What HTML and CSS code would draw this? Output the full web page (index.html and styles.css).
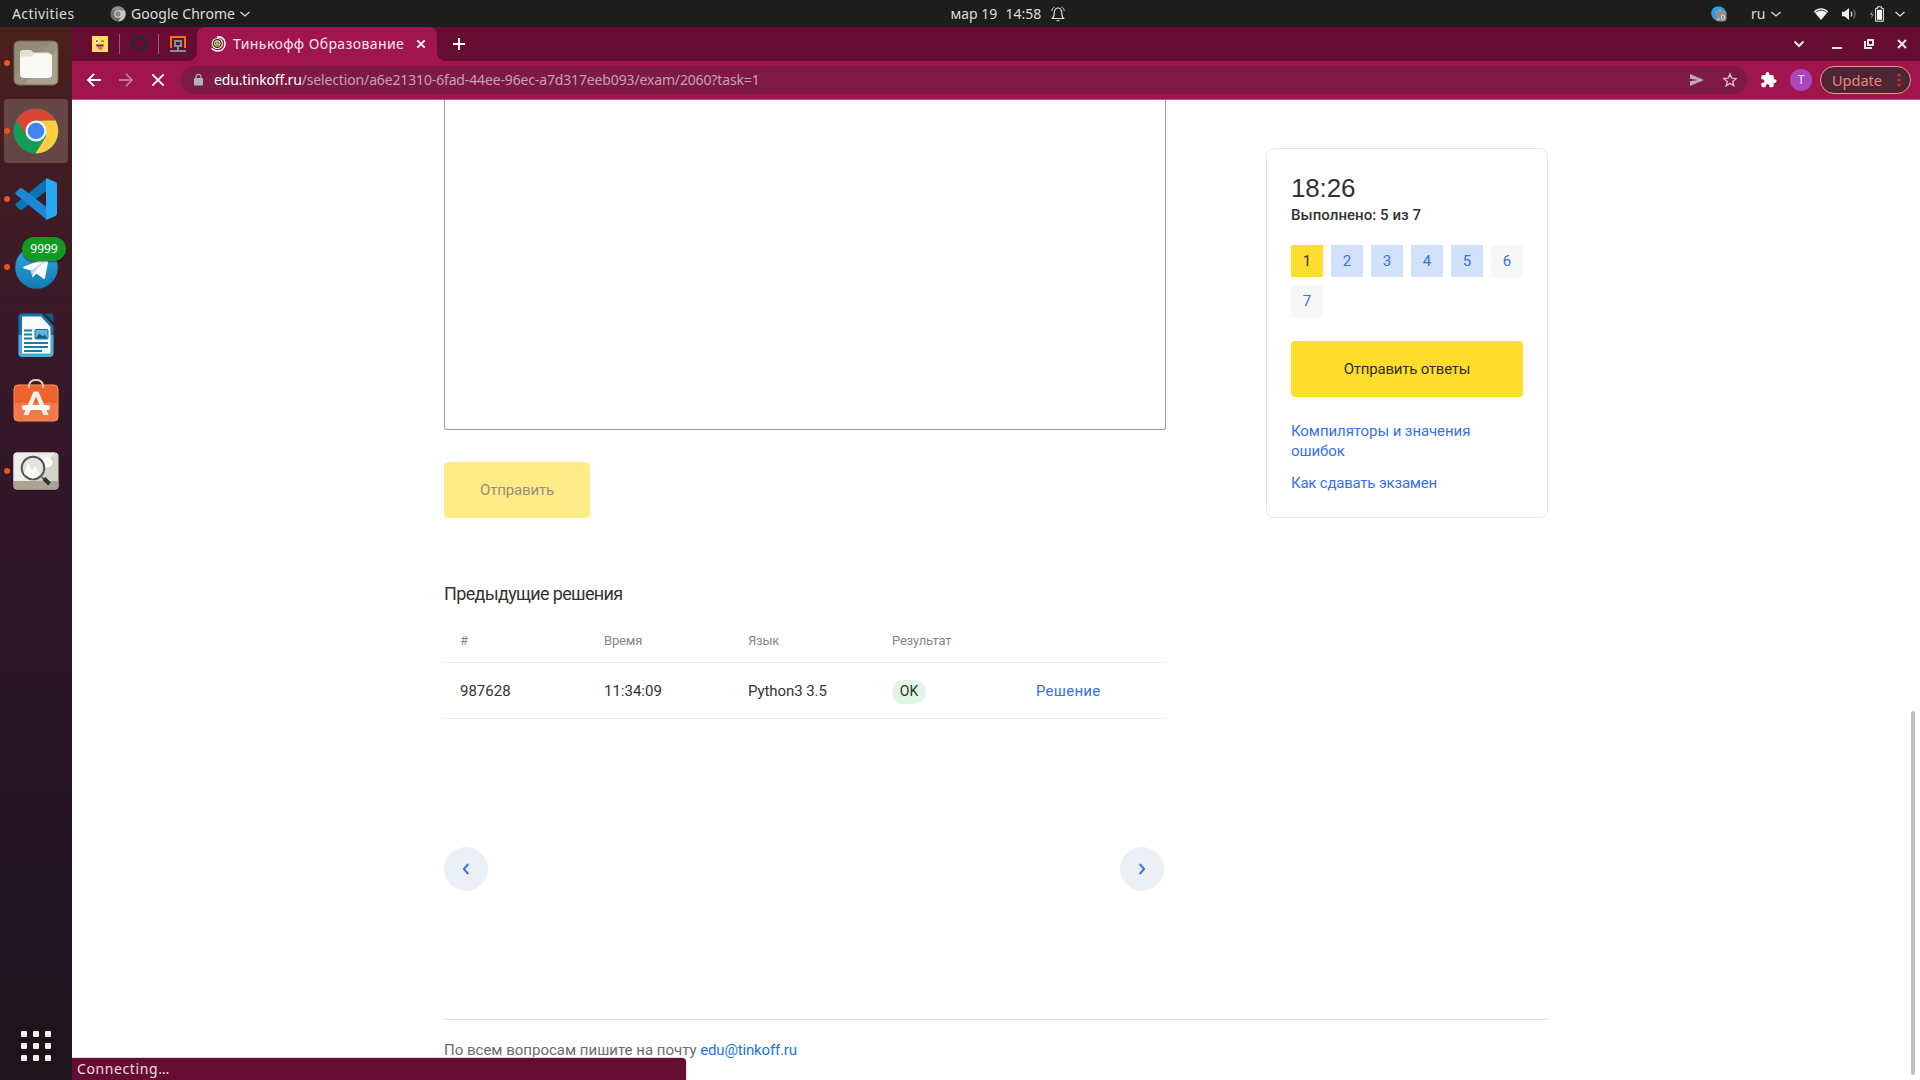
FILE: index.html
```html
<!DOCTYPE html>
<html lang="ru">
<head>
<meta charset="utf-8">
<title>Тинькофф Образование</title>
<link rel="stylesheet" href="styles.css">
</head>
<body>
<header class="topbar">
  <div class="topbar-left">
    <span class="activities">Activities</span>
    <svg class="app-icon" width="16" height="16" viewBox="0 0 16 16"><circle cx="8" cy="8" r="7.6" fill="#6f6f6f"/><path d="M8 4.2h6.7A7.6 7.6 0 0 1 8.3 15.600L11.300 10z" fill="#c4c4c4"/><path d="M1.400 4.200A7.600 7.600 0 0 1 14.700 4.200H8z" fill="#8c8c8c"/><circle cx="8" cy="8" r="3.700" fill="#ddd"/><circle cx="8" cy="8" r="2.700" fill="#858585"/></svg>
    <span class="app-name">Google Chrome</span>
    <svg width="12" height="8" viewBox="0 0 12 8"><path d="M1.500 2l4.500 4 4.500-4" fill="none" stroke="#ddd" stroke-width="1.300"/></svg>
  </div>
  <div class="clock">
    <span class="date">мар 19</span><span class="time">14:58</span>
    <svg width="14" height="16" viewBox="0 0 14 16" fill="none" stroke="#ddd" stroke-width="1.200"><path d="M1.500 12.500c2-2 1.500-4 1.800-6.200C3.600 3.500 5 2 7 2s3.400 1.500 3.700 4.300c.3 2.200-.2 4.200 1.800 6.200z"/><path d="M5.500 14.700h3M.8 5C1 3 2 1.600 3.500 1M13.200 5C13 3 12 1.600 10.500 1" stroke-width="1"/></svg>
  </div>
  <div class="tray">
    <svg class="tray-tg" width="16" height="16" viewBox="0 0 16 16"><circle cx="7.500" cy="7.500" r="7.300" fill="#2a9fdb"/><path d="M4 6l6-2.500-1 4" fill="#e8f4fb"/><rect x="4.500" y="4.500" width="11" height="11" rx="3" fill="#8f8f8f"/><path d="M6 13h3" stroke="#ddd"/><rect x="10.500" y="9" width="3" height="4.500" rx="1" fill="none" stroke="#ddd"/></svg>
    <span class="lang">ru</span>
    <svg class="tray-chev1" width="12" height="8" viewBox="0 0 12 8"><path d="M1.500 2l4.500 4 4.500-4" fill="none" stroke="#ddd" stroke-width="1.300"/></svg>
    <svg class="tray-wifi" width="16" height="14" viewBox="0 0 16 14"><path d="M.8 4.500C5 .3 11 .3 15.200 4.500L8 13z" fill="#f2f2f2"/><path d="M2.300 5.400c3.500-2.900 7.900-2.900 11.400 0" fill="none" stroke="#1d1d1d" stroke-width=".9"/></svg>
    <svg class="tray-sound" width="16" height="14" viewBox="0 0 16 14"><path d="M1 4.800h2.500L8 1v12L3.500 9.200H1z" fill="#f2f2f2"/><path d="M10 4.500c1 1.500 1 3.500 0 5" fill="none" stroke="#ddd" stroke-width="1.200"/><path d="M12.500 2.700c2 2.700 2 5.900 0 8.600" fill="none" stroke="#777" stroke-width="1.200"/></svg>
    <svg class="tray-batt" width="16" height="16" viewBox="0 0 16 16"><path d="M3.600 4L.8 9h2l-.6 4 2.600-5H3z" fill="#888"/><path d="M6.600 2.300h2V.8h3.800v1.500h2v12.900H6.600z" fill="none" stroke="#f2f2f2" stroke-width="1"/><rect x="8" y="3.800" width="5" height="10" fill="#f2f2f2"/></svg>
    <svg width="12" height="8" viewBox="0 0 12 8"><path d="M1.500 2l4.500 4 4.500-4" fill="none" stroke="#ddd" stroke-width="1.300"/></svg>
  </div>
</header>

<div class="desktop">
<nav class="dock">
  <div class="dock-item running">
    <svg width="46" height="46" viewBox="0 0 46 46"><rect x="1" y="1" width="44" height="44" rx="5" fill="#9b927d"/><path d="M6 1h34L1 36V6a5 5 0 0 1 5-5z" fill="#948b77"/><path d="M45 8v32a5 5 0 0 1-5 5H10z" fill="#aaa28d"/><rect x="1" y="1" width="44" height="44" rx="5" fill="none" stroke="#6c6655"/><path d="M7 13a3 3 0 0 1 3-3h7c2 0 2 2 4 2.500H36v6H7z" fill="#e2dfd2"/><path d="M7 16.500h10c3 0 3-3 6-3h13a3 3 0 0 1 3 3V34a4 4 0 0 1-4 4H11a4 4 0 0 1-4-4z" fill="#f8f8f6"/></svg>
  </div>
  <div class="dock-item running active">
    <svg width="46" height="46" viewBox="0 0 46 46"><circle cx="23" cy="23" r="22.500" fill="#149c58"/><path d="M3.500 12A22.500 22.500 0 0 1 42.500 12.600H23L15 30z" fill="#dc4437"/><path d="M42.700 12.700A22.500 22.500 0 0 1 22.500 45.500L33 28.500 30 12.700z" fill="#ffcd40"/><path d="M42.700 12.700H23v4h18z" fill="#ffcd40"/><circle cx="23" cy="23" r="10.500" fill="#f4f4f4"/><circle cx="23" cy="23" r="8.300" fill="#4286f5"/></svg>
  </div>
  <div class="dock-item running">
    <svg width="44" height="44" viewBox="0 0 44 44"><path d="M1.500 28.500l4 4q1.500 1 3 0L33 13.500V1L2 26.500q-1.500 1 -.5 2z" fill="#0c73b6"/><path d="M1.500 15.500l4-4q1.500-1 3 0L33 30.500V43L2 17.500q-1.500-1-.5-2z" fill="#1c88d5"/><path d="M32 1l9.500 4q1.500.8 1.500 2.500v29q0 1.700-1.500 2.500L32 43z" fill="#28a8f2"/></svg>
  </div>
  <div class="dock-item running">
    <svg width="43" height="43" viewBox="0 0 43 43"><defs><linearGradient id="tg" x2="0" y2="1"><stop stop-color="#34aadf"/><stop offset="1" stop-color="#1179b5"/></linearGradient></defs><circle cx="21.500" cy="21.500" r="21.300" fill="url(#tg)"/><path d="M8.500 20.800L32.500 11.500q1.500-.3 1.200 1.600L30 32q-.5 1.400-2 .6l-6.500-5-4 4-1.500-7-7-2.200q-1.300-.8-.5-1.600z" fill="#fff"/><path d="M16 24.500l13-9-9.500 10.500-2 5.500z" fill="#b9d8ea"/></svg>
    <span class="badge">9999</span>
  </div>
  <div class="dock-item">
    <svg width="38" height="46" viewBox="0 0 38 46"><path d="M5 1.500h20L36.500 14v27a4 4 0 0 1-4 4h-27a4 4 0 0 1-4-4V5a4 4 0 0 1 3.500-3.500z" fill="#1274a9"/><path d="M1.500 23h35v18a4 4 0 0 1-4 4h-27a4 4 0 0 1-4-4z" fill="#4da9d8"/><path d="M5 4.500h19L33.500 15v26.500H5z" fill="#fbfbfb"/><path d="M27.500 1.500h6q3 0 3 3v6z" fill="#0c5d8d"/><path d="M7 18.500h8M7 22.500h8M7 26.500h8M7 31h24M7 35h24M7 39h18" stroke="#1a7bb3" stroke-width="2"/><rect x="18" y="17.500" width="13" height="9.500" rx="1" fill="#63b5df" stroke="#16719f"/><path d="M18.500 26.500l4-5 3 3 2-2 3 4z" fill="#0d5d8d"/></svg>
  </div>
  <div class="dock-item store">
    <svg width="46" height="46" viewBox="0 0 46 46"><rect x="1" y="9" width="44" height="36" rx="4" fill="#ef632f"/><path d="M1 27h44v14a4 4 0 0 1-4 4H5a4 4 0 0 1-4-4z" fill="#f27a49"/><rect x="1" y="9" width="44" height="36" rx="4" fill="none" stroke="#f99265"/><path d="M16 12V9q1-5 7-5t7 5v3" fill="none" stroke="#f2d0a0" stroke-width="1.800"/><path d="M20.500 15.500h5L35.500 39h-5.200L23 20.500 15.700 39h-5.200z" fill="#fbefe7"/><rect x="9" y="29" width="28" height="5" rx="2.500" fill="#fff"/></svg>
  </div>
  <div class="dock-item running">
    <svg width="46" height="38" viewBox="0 0 46 38"><rect x=".5" y=".5" width="45" height="37" rx="4" fill="#d5d4c8"/><path d="M4 .5h38L20 29H.5V4A3.500 3.500 0 0 1 4 .5z" fill="#eeeee8"/><path d="M.5 29h45v5a3.500 3.500 0 0 1-3.500 3.500H4A3.500 3.500 0 0 1 .5 34z" fill="#aaa592"/><circle cx="34.500" cy="10.500" r="5" fill="#fafafa"/><circle cx="20" cy="16" r="11.300" fill="#e4e4df" stroke="#55565b" stroke-width="2"/><path d="M11 22l4-11 4 7 3-4 5 8-7 5z" fill="#fff" opacity=".8"/><path d="M29 25l2.500 2.500" stroke="#666" stroke-width="2"/><path d="M31 26.500l5.500 5.500" stroke="#333" stroke-width="4"/></svg>
  </div>
  <div class="dock-item apps">
    <svg width="30" height="30" viewBox="0 0 30 30" fill="#f2f1ee"><rect width="6" height="6" rx="1"/><rect x="12" width="6" height="6" rx="1"/><rect x="24" width="6" height="6" rx="1"/><rect y="12" width="6" height="6" rx="1"/><rect x="12" y="12" width="6" height="6" rx="1"/><rect x="24" y="12" width="6" height="6" rx="1"/><rect y="24" width="6" height="6" rx="1"/><rect x="12" y="24" width="6" height="6" rx="1"/><rect x="24" y="24" width="6" height="6" rx="1"/></svg>
  </div>
</nav>

<div class="browser">
  <div class="tabstrip">
    <div class="pinned">
      <svg width="16" height="16" viewBox="0 0 16 16"><rect width="16" height="16" fill="#ffdd60"/><circle cx="4.600" cy="5.200" r="2" fill="#fff"/><circle cx="4.800" cy="5.200" r=".9" fill="#432"/><path d="M9 5.500q1.500-1.500 3 0" stroke="#6a4520" fill="none"/><path d="M4 8.500h8q-.3 2.500-2.500 2.500h-3Q4.300 11 4 8.500z" fill="#5c3a1e"/><path d="M6 10h4.500v2q-.5 2-2.200 2T6 12z" fill="#f0588a"/></svg>
    </div>
    <div class="pinned">
      <svg width="16" height="16" viewBox="0 0 16 16"><path fill="#24292e" d="M8 0C3.580 0 0 3.580 0 8c0 3.540 2.290 6.530 5.470 7.590.4.070.55-.17.55-.38 0-.19-.01-.82-.01-1.490-2.010.37-2.530-.49-2.690-.94-.09-.23-.48-.94-.82-1.130-.28-.15-.68-.52-.01-.53.63-.01 1.080.58 1.230.82.72 1.210 1.870.87 2.330.66.07-.52.28-.87.51-1.070-1.780-.2-3.640-.89-3.640-3.950 0-.87.31-1.590.82-2.150-.08-.2-.36-1.020.08-2.120 0 0 .67-.21 2.200.82.64-.18 1.320-.27 2-.27s1.360.09 2 .27c1.530-1.040 2.200-.82 2.200-.82.44 1.100.16 1.920.08 2.120.51.56.82 1.270.82 2.150 0 3.070-1.870 3.750-3.650 3.950.29.25.54.73.54 1.480 0 1.070-.01 1.930-.01 2.200 0 .21.15.46.55.38A8.010 8.010 0 0 0 16 8c0-4.420-3.580-8-8-8z"/></svg>
    </div>
    <div class="pinned last">
      <svg width="16" height="16" viewBox="0 0 16 16"><path d="M1 12V1h14v11" fill="none" stroke="#ff6d00" stroke-width="2"/><path d="M5 5h6v5H5zM8 10v5M0 15h16" fill="none" stroke="#6d9a9c" stroke-width="2"/></svg>
    </div>
    <div class="tab">
      <svg width="15" height="16" viewBox="0 0 15 16"><path d="M6 1.500C9-.2 14 2 14 7.500S10 15.500 6.500 15 1 13 1 12" fill="none" stroke="#fff" stroke-width="1.500"/><circle cx="6.300" cy="7.500" r="5.600" fill="#f3f3ee"/><circle cx="6.300" cy="7.500" r="3.800" fill="none" stroke="#2b2b1c" stroke-width="1.300"/><path d="M4.500 6h3.600v2q-.5 2-1.800 2.500Q5 10 4.500 8z" fill="#d9c400" stroke="#333" stroke-width=".6"/></svg>
      <span class="tab-title">Тинькофф Образование</span>
      <svg width="10" height="10" viewBox="0 0 10 10"><path d="M1.300 1.300l7.400 7.400M8.700 1.300L1.300 8.700" stroke="#fff" stroke-width="1.700"/></svg>
    </div>
    <svg class="new-tab" width="12" height="12" viewBox="0 0 12 12"><path d="M6 0v12M0 6h12" stroke="#fff" stroke-width="2"/></svg>
    <div class="win-controls">
      <svg width="12" height="8" viewBox="0 0 12 8"><path d="M1.500 1.500L6 6l4.500-4.500" fill="none" stroke="#f0e4ea" stroke-width="2"/></svg>
      <svg width="10" height="10" viewBox="0 0 10 10"><path d="M0 9h10" stroke="#f0e4ea" stroke-width="2"/></svg>
      <svg width="10" height="10" viewBox="0 0 10 10"><path d="M4 1h5v5H4zM1 2v7h7" fill="none" stroke="#f0e4ea" stroke-width="2"/></svg>
      <svg width="10" height="10" viewBox="0 0 10 10"><path d="M1 1l8 8M9 1L1 9" stroke="#f0e4ea" stroke-width="2"/></svg>
    </div>
  </div>

  <div class="toolbar">
    <div class="nav-icons">
      <svg width="14" height="14" viewBox="0 0 14 14"><path d="M14 7H1.500M7 .8L1 7l6 6.200" fill="none" stroke="#fff" stroke-width="1.900"/></svg>
      <svg width="14" height="14" viewBox="0 0 14 14"><path d="M0 7h12.500M7 .8L13 7l-6 6.200" fill="none" stroke="#c0769a" stroke-width="1.900"/></svg>
      <svg width="14" height="14" viewBox="0 0 14 14"><path d="M1.300 1.300l11.400 11.400M12.700 1.300L1.300 12.700" stroke="#fff" stroke-width="1.900"/></svg>
    </div>
    <div class="omnibox">
      <svg width="9" height="12" viewBox="0 0 9 12"><rect y="4" width="9" height="7.500" rx="1" fill="#b0b3b8"/><path d="M2 4.500V3a2.500 2.500 0 0 1 5 0v1.500" fill="none" stroke="#b0b3b8" stroke-width="1.200"/></svg>
      <span class="url"><span class="url-host">edu.tinkoff.ru</span>/selection/a6e21310-6fad-44ee-96ec-a7d317eeb093/exam/2060?task=1</span>
      <svg class="send" width="14" height="12" viewBox="0 0 14 12"><path d="M0 0l14 6L0 12V7.300L8 6 0 4.700z" fill="#bcaab4"/></svg>
      <svg class="star" width="16" height="16" viewBox="0 0 24 24"><path d="M12 3.200l2.600 6 6.500.6-4.900 4.300 1.500 6.400L12 17.100l-5.700 3.400 1.500-6.400-4.900-4.300 6.500-.6z" fill="none" stroke="#cbb8c2" stroke-width="2.200"/></svg>
    </div>
    <svg class="puzzle" width="16" height="16" viewBox="2 1 21 22"><path fill="#fff" d="M20.500 11H19V7c0-1.100-.9-2-2-2h-4V3.500a2.500 2.500 0 0 0-5 0V5H4c-1.100 0-1.990.9-1.990 2v3.800H3.500c1.490 0 2.700 1.210 2.700 2.700s-1.210 2.700-2.700 2.700H2V20c0 1.100.9 2 2 2h3.800v-1.500c0-1.490 1.210-2.700 2.700-2.700s2.700 1.210 2.700 2.700V22H17c1.100 0 2-.9 2-2v-4h1.500a2.500 2.500 0 0 0 0-5z"/></svg>
    <span class="avatar">T</span>
    <div class="update"><span>Update</span><svg width="4" height="14" viewBox="0 0 4 14" fill="#e5291d"><circle cx="2" cy="2" r="1.600"/><circle cx="2" cy="7" r="1.600"/><circle cx="2" cy="12" r="1.600"/></svg></div>
  </div>

  <div class="page">
    <div class="columns">
      <main class="main">
        <div class="editor"></div>
        <div class="submit"><span>Отправить</span></div>
        <h2><span>Предыдущие решения</span></h2>
        <div class="row head"><div>#</div><div>Время</div><div>Язык</div><div>Результат</div><div></div></div>
        <div class="row"><div>987628</div><div class="t-time">11:34:09</div><div class="t-lang">Python3 3.5</div><div><span class="ok">OK</span></div><div><a class="t-sol">Решение</a></div></div>
        <div class="pager">
          <div class="circle"><svg width="8" height="12" viewBox="0 0 8 12"><path d="M6.300 1L1.800 6l4.500 5" fill="none" stroke="#3870ee" stroke-width="1.900"/></svg></div>
          <div class="circle"><svg width="8" height="12" viewBox="0 0 8 12"><path d="M1.700 1l4.500 5-4.500 5" fill="none" stroke="#3870ee" stroke-width="1.900"/></svg></div>
        </div>
      </main>
      <aside class="card">
        <div class="timer">18:26</div>
        <div class="done">Выполнено: 5 из 7</div>
        <div class="tasks"><span class="cur">1</span><span class="fin">2</span><span class="fin">3</span><span class="fin">4</span><span class="fin">5</span><span>6</span><span>7</span></div>
        <div class="answers"><span>Отправить ответы</span></div>
        <a class="link compilers">Компиляторы и значения ошибок</a>
        <a class="link howto">Как сдавать экзамен</a>
      </aside>
    </div>
    <footer class="footer"><span>По всем вопросам пишите на почту <a>edu@tinkoff.ru</a></span></footer>
    <div class="scrollbar"></div>
    <div class="status">Connecting…</div>
  </div>
</div>
</div>
</body>
</html>
```
FILE: styles.css
```css
* { box-sizing: border-box; }
html, body { margin: 0; height: 100%; overflow: hidden; }
body {
  display: flex; flex-direction: column; width: 1920px; height: 1080px;
  font-family: "Noto Sans", "Open Sans", sans-serif; background: #fff;
}
svg { display: block; flex: none; }
span, a { white-space: nowrap; }

/* GNOME top bar */
.topbar {
  flex: none; height: 27px; background: #1d1d1d; color: #dedede; font-size: 14px; line-height: 26px;
  display: grid; grid-template-columns: 1fr auto 1fr; align-items: center;
}
.topbar-left { display: flex; align-items: center; padding-left: 12px; }
.activities { width: 98px; letter-spacing: .42px; }
.app-name { margin: 0 4px 0 5px; width: 104px; letter-spacing: .05px; }
.clock { display: flex; align-items: center; margin-left: 94px; margin-right: -1px; }
.date { width: 55px; }
.time { width: 45px; }
.tray { display: flex; align-items: center; justify-content: flex-end; padding-right: 14px; }
.tray-tg { margin-right: 24px; }
.lang { width: 19px; }
.tray-chev1 { margin-right: 31px; }
.tray-wifi { margin-right: 12px; }
.tray-sound { margin-right: 12px; }
.tray-batt { margin-right: 9px; }

.desktop { flex: 1; display: flex; min-height: 0; }

/* dock */
.dock {
  flex: none; width: 72px; padding: 4px 4px 2px; display: flex; flex-direction: column; gap: 4px;
  background: linear-gradient(#4b1f1b 0, #421c22 120px, #3b1a28 270px, #311629 480px, #261427 760px, #20141c 1000px);
}
.dock-item {
  position: relative; height: 64px; border-radius: 4px; display: flex; align-items: center; justify-content: center; flex: none;
}
.dock-item.active { background: #654645; }
.dock-item.running::before {
  content: ""; position: absolute; left: 0; top: 29px; width: 6px; height: 6px; border-radius: 50%; background: #e95420;
}
.dock-item.store { padding-bottom: 8px; }
.dock-item.apps { margin-top: auto; }
.badge {
  position: absolute; left: 18px; top: 2px; width: 44px; height: 24px; border-radius: 12px;
  background: #139a25; color: #fff; font-size: 12px; line-height: 24px; text-align: center;
  box-shadow: 0 1px 2px rgba(0, 0, 0, .5);
}

/* browser chrome */
.browser { flex: 1; display: flex; flex-direction: column; min-width: 0; }
.tabstrip { flex: none; height: 34px; background: #660c31; display: flex; align-items: center; padding-left: 8px; }
.pinned { width: 39px; height: 20px; display: flex; align-items: center; justify-content: center; border-right: 1px solid #9a5673; }
.pinned:first-child { width: 40px; padding-left: 1px; padding-right: 1px; }
.pinned.last { border: 0; width: 38px; }
.tab {
  position: relative; width: 240px; height: 34px; border-radius: 8px 8px 0 0; background: #a1154e; color: #f6e6ed;
  display: flex; align-items: center; padding: 0 11px 0 14px; font-size: 14px;
}
.tab::before, .tab::after { content: ""; position: absolute; bottom: 0; width: 8px; height: 8px; }
.tab::before { left: -8px; background: radial-gradient(circle at 0 0, transparent 7.500px, #a1154e 8px); }
.tab::after { right: -8px; background: radial-gradient(circle at 100% 0, transparent 7.500px, #a1154e 8px); }
.tab-title { margin-left: 7px; margin-right: auto; letter-spacing: .4px; padding-bottom: 1px; }
.new-tab { margin-left: 16px; }
.win-controls { margin-left: auto; margin-right: 13px; display: flex; align-items: center; }
.win-controls svg:nth-child(2) { margin-left: 27px; }
.win-controls svg:nth-child(3) { margin-left: 22px; }
.win-controls svg:nth-child(4) { margin-left: 23px; }

.toolbar {
  flex: none; height: 39px; background: #a1154e; border-bottom: 1px solid #c25581;
  display: flex; align-items: center; padding: 0 9px 0 15px;
}
.nav-icons { display: flex; gap: 18px; margin-right: 15px; }
.omnibox {
  width: 1567px; height: 28px; border-radius: 14px; background: #7d1943; color: #c9a0b3;
  display: flex; align-items: center; padding: 0 9px 0 14px; font-size: 14px;
}
.url { margin-left: 11px; margin-right: auto; letter-spacing: -.145px; padding-bottom: 1px; }
.url-host { color: #fff; }
.send { margin-right: 18px; }
.puzzle { margin-left: 14px; }
.avatar {
  margin-left: 13px; width: 22px; height: 22px; border-radius: 50%; background: #ab47bc; color: #f0e6f4;
  font-size: 12px; line-height: 22px; text-align: center;
}
.update {
  margin-left: 8px; width: 91px; height: 28px; border: 1px solid #f29b82; border-radius: 14px; background: #4d2635;
  color: #ee8378; font-size: 14.500px; display: flex; align-items: center; justify-content: space-between; padding: 0 9px 0 11px;
}
.update span { padding-bottom: 1px; }

/* web page */
.page {
  position: relative; flex: 1; min-height: 0; overflow: hidden; padding-left: 372px;
  font-family: Roboto, "Liberation Sans", sans-serif; font-size: 15px; color: #333; background: #fff;
}
.columns { display: flex; width: 1104px; height: 919px; justify-content: space-between; align-items: flex-start; }
.main { width: 722px; }
.editor { height: 330px; border: 1px solid #999; border-top: 0; border-radius: 0 0 3px 3px; }
.submit {
  margin-top: 32px; width: 146px; height: 56px; border-radius: 4px; background: #ffeb88; color: #96907c;
  display: flex; align-items: center; justify-content: center; letter-spacing: -.15px;
}
h2 { margin: 64px 0 0; font-size: 18px; line-height: 24px; font-weight: 400; letter-spacing: -.66px; }
.row {
  width: 720px; height: 56px; display: grid; grid-template-columns: repeat(5, 144px); align-items: center;
  border-bottom: 1px solid #e7e8ea; line-height: 24px;
}
.row > div { padding-left: 16px; }
.row.head { margin-top: 16px; height: 41px; font-size: 13px; color: #84868a; line-height: 38px; letter-spacing: -.2px; align-items: start; }
.t-lang { letter-spacing: -.08px; }
.t-sol { letter-spacing: .25px; }
.ok {
  display: inline-block; width: 34px; height: 24px; line-height: 23px; border-radius: 12px; background: #dff6e4;
  font-size: 14px; text-align: center; vertical-align: middle; margin-top: 2px;
}
a { color: #3870ee; text-decoration: none; }
.pager { width: 720px; margin-top: 128px; display: flex; justify-content: space-between; }
.circle { width: 44px; height: 44px; border-radius: 50%; background: #ebf0f7; display: flex; align-items: center; justify-content: center; }

.card {
  width: 282px; height: 370px; margin-top: 48px; padding: 23px 24px; border: 1px solid #e5e6e8; border-radius: 8px;
  display: flex; flex-direction: column;
}
.timer { font-family: "Liberation Sans", Arial, sans-serif; font-size: 26px; line-height: 32px; letter-spacing: -.15px; }
.done { margin-top: 1px; font-weight: 500; line-height: 20px; letter-spacing: .06px; }
.tasks { margin-top: 20px; display: grid; grid-template-columns: repeat(6, 32px); gap: 8px; }
.tasks span { height: 32px; line-height: 32px; text-align: center; color: #3870ee; background: #f6f7f9; }
.tasks .fin { background: #d0e1f9; }
.tasks .cur { background: #ffdd2d; color: #333; }
.answers {
  flex: none; margin: 24px 0; height: 56px; border-radius: 4px; background: #ffdd2d; color: #302d20;
  display: flex; align-items: center; justify-content: center; letter-spacing: -.22px;
}
.link { line-height: 20px; white-space: normal; }
.compilers { letter-spacing: -.08px; }
.howto { margin-top: 12px; letter-spacing: -.22px; }

.footer { width: 1104px; border-top: 1px solid #dddfe0; padding-top: 20px; line-height: 20px; color: #6a6b6d; }
.footer a { color: #1a73e8; letter-spacing: -.17px; }
.scrollbar { position: absolute; right: 5px; top: 611px; width: 4px; height: 364px; border-radius: 2px; background: #bfbfbf; }
.status {
  position: absolute; left: 0; bottom: 0; width: 614px; height: 22px; border-top-right-radius: 4px; background: #660c31;
  color: #eedde5; font: 14px/22px "Noto Sans", sans-serif; letter-spacing: .6px; padding-left: 5px; box-shadow: 0 0 0 1px #ddd;
}
```
